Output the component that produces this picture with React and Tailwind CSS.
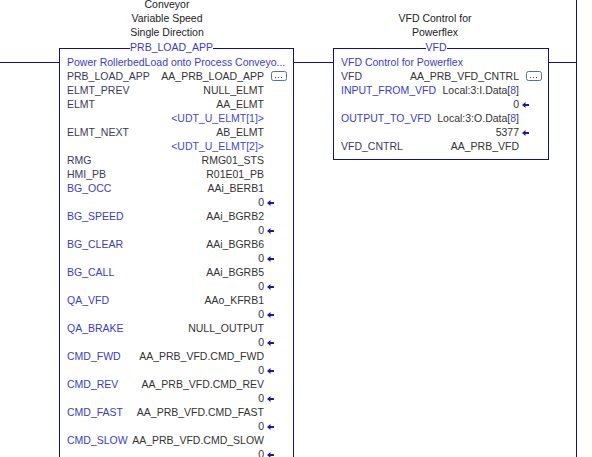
import React from "react";

const WIRE = "bg-[#10108a]";

const labelColor = {
  dark: "text-[#3a3a5c]",
  blue: "text-[#3c3cc4]",
};

function DotsButton() {
  return (
    <svg width="16" height="10" viewBox="0 0 16 10" className="ml-[7px]">
      <rect x="0.5" y="0.5" width="15" height="9" rx="2" fill="#fff" stroke="#5f6f92" />
      <rect x="4" y="6" width="1" height="1" fill="#3a3a5c" />
      <rect x="7" y="6" width="1" height="1" fill="#3a3a5c" />
      <rect x="10" y="6" width="1" height="1" fill="#3a3a5c" />
    </svg>
  );
}

function Arrow() {
  return (
    <svg width="7" height="6" viewBox="0 0 7 6" className="ml-[3px] mt-[2px]">
      <path d="M0 3 L3.5 0 L3.5 2 L7 2 L7 4 L3.5 4 L3.5 6 Z" fill="#1a1a9c" />
    </svg>
  );
}

function Row({ label, value, kind = "dark", trail, valueBlue }) {
  return (
    <div className="flex h-[14px] items-center whitespace-nowrap">
      <span className={`flex-1 ${labelColor[kind]}`}>{label}</span>
      <span className={`text-right ${valueBlue ? "text-[#4646cc]" : "text-[#333333]"}`}>{value}</span>
      <span className="flex h-[14px] w-[29px] shrink-0 items-center">
        {trail === "btn" && <DotsButton />}
        {trail === "arrow" && <Arrow />}
      </span>
    </div>
  );
}

function Block({ width, lines, descPad, title, desc, rows }) {
  return (
    <div className={`flex shrink-0 flex-col ${width}`}>
      <div className={`flex h-[48px] flex-col justify-end pb-[9px] text-center text-[#222222] ${descPad}`}>
        {lines.map(l => <div key={l}>{l}</div>)}
      </div>
      <div className="relative border border-[#10108a] pb-[6px] pl-[7px] pt-[6px]">
        <div className="absolute -top-[9px] left-0 right-0 flex justify-center pr-[10px]">
          <span className="bg-white text-[#3c3cc4]">{title}</span>
        </div>
        <div className="h-[14px] overflow-hidden whitespace-nowrap text-[#3c3cc4]">{desc}</div>
        {rows.map((r, i) => <Row key={i} {...r} />)}
      </div>
    </div>
  );
}

const leftRows = [
  { label: "PRB_LOAD_APP", value: "AA_PRB_LOAD_APP", trail: "btn" },
  { label: "ELMT_PREV", value: "NULL_ELMT" },
  { label: "ELMT", value: "AA_ELMT" },
  { label: "", value: "<UDT_U_ELMT[1]>", valueBlue: true },
  { label: "ELMT_NEXT", value: "AB_ELMT" },
  { label: "", value: "<UDT_U_ELMT[2]>", valueBlue: true },
  { label: "RMG", value: "RMG01_STS" },
  { label: "HMI_PB", value: "R01E01_PB" },
  { label: "BG_OCC", value: "AAi_BERB1", kind: "blue" },
  { label: "", value: "0", trail: "arrow" },
  { label: "BG_SPEED", value: "AAi_BGRB2", kind: "blue" },
  { label: "", value: "0", trail: "arrow" },
  { label: "BG_CLEAR", value: "AAi_BGRB6", kind: "blue" },
  { label: "", value: "0", trail: "arrow" },
  { label: "BG_CALL", value: "AAi_BGRB5", kind: "blue" },
  { label: "", value: "0", trail: "arrow" },
  { label: "QA_VFD", value: "AAo_KFRB1", kind: "blue" },
  { label: "", value: "0", trail: "arrow" },
  { label: "QA_BRAKE", value: "NULL_OUTPUT", kind: "blue" },
  { label: "", value: "0", trail: "arrow" },
  { label: "CMD_FWD", value: "AA_PRB_VFD.CMD_FWD", kind: "blue" },
  { label: "", value: "0", trail: "arrow" },
  { label: "CMD_REV", value: "AA_PRB_VFD.CMD_REV", kind: "blue" },
  { label: "", value: "0", trail: "arrow" },
  { label: "CMD_FAST", value: "AA_PRB_VFD.CMD_FAST", kind: "blue" },
  { label: "", value: "0", trail: "arrow" },
  { label: "CMD_SLOW", value: "AA_PRB_VFD.CMD_SLOW", kind: "blue" },
  { label: "", value: "0", trail: "arrow" },
];

const rightRows = [
  { label: "VFD", value: "AA_PRB_VFD_CNTRL", trail: "btn" },
  { label: "INPUT_FROM_VFD", value: <>Local:3:I.Data[<span className="text-[#4646cc]">8</span>]</>, kind: "blue" },
  { label: "", value: "0", trail: "arrow" },
  { label: "OUTPUT_TO_VFD", value: <>Local:3:O.Data[<span className="text-[#4646cc]">8</span>]</>, kind: "blue" },
  { label: "", value: "5377", trail: "arrow" },
  { label: "VFD_CNTRL", value: "AA_PRB_VFD" },
];

export default function App() {
  return (
    <div className="flex h-[457px] w-[592px] items-start overflow-hidden bg-white font-['Liberation_Sans',Arial,sans-serif] text-[10.5px] leading-[14px]">
      <div className={`mt-[62px] h-px w-[59px] shrink-0 ${WIRE}`} />
      <Block
        width="w-[235px]"
        descPad="pr-[19px]"
        lines={["Conveyor", "Variable Speed", "Single Direction"]}
        title="PRB_LOAD_APP"
        desc="Power RollerbedLoad onto Process Conveyo..."
        rows={leftRows}
      />
      <div className={`mt-[62px] h-px w-[39px] shrink-0 ${WIRE}`} />
      <Block
        width="w-[216px]"
        descPad="pr-[12px]"
        lines={["VFD Control for", "Powerflex"]}
        title="VFD"
        desc="VFD Control for Powerflex"
        rows={rightRows}
      />
      <div className={`mt-[62px] h-px w-[27px] shrink-0 ${WIRE}`} />
      <div className={`h-[457px] w-px shrink-0 ${WIRE}`} />
    </div>
  );
}
